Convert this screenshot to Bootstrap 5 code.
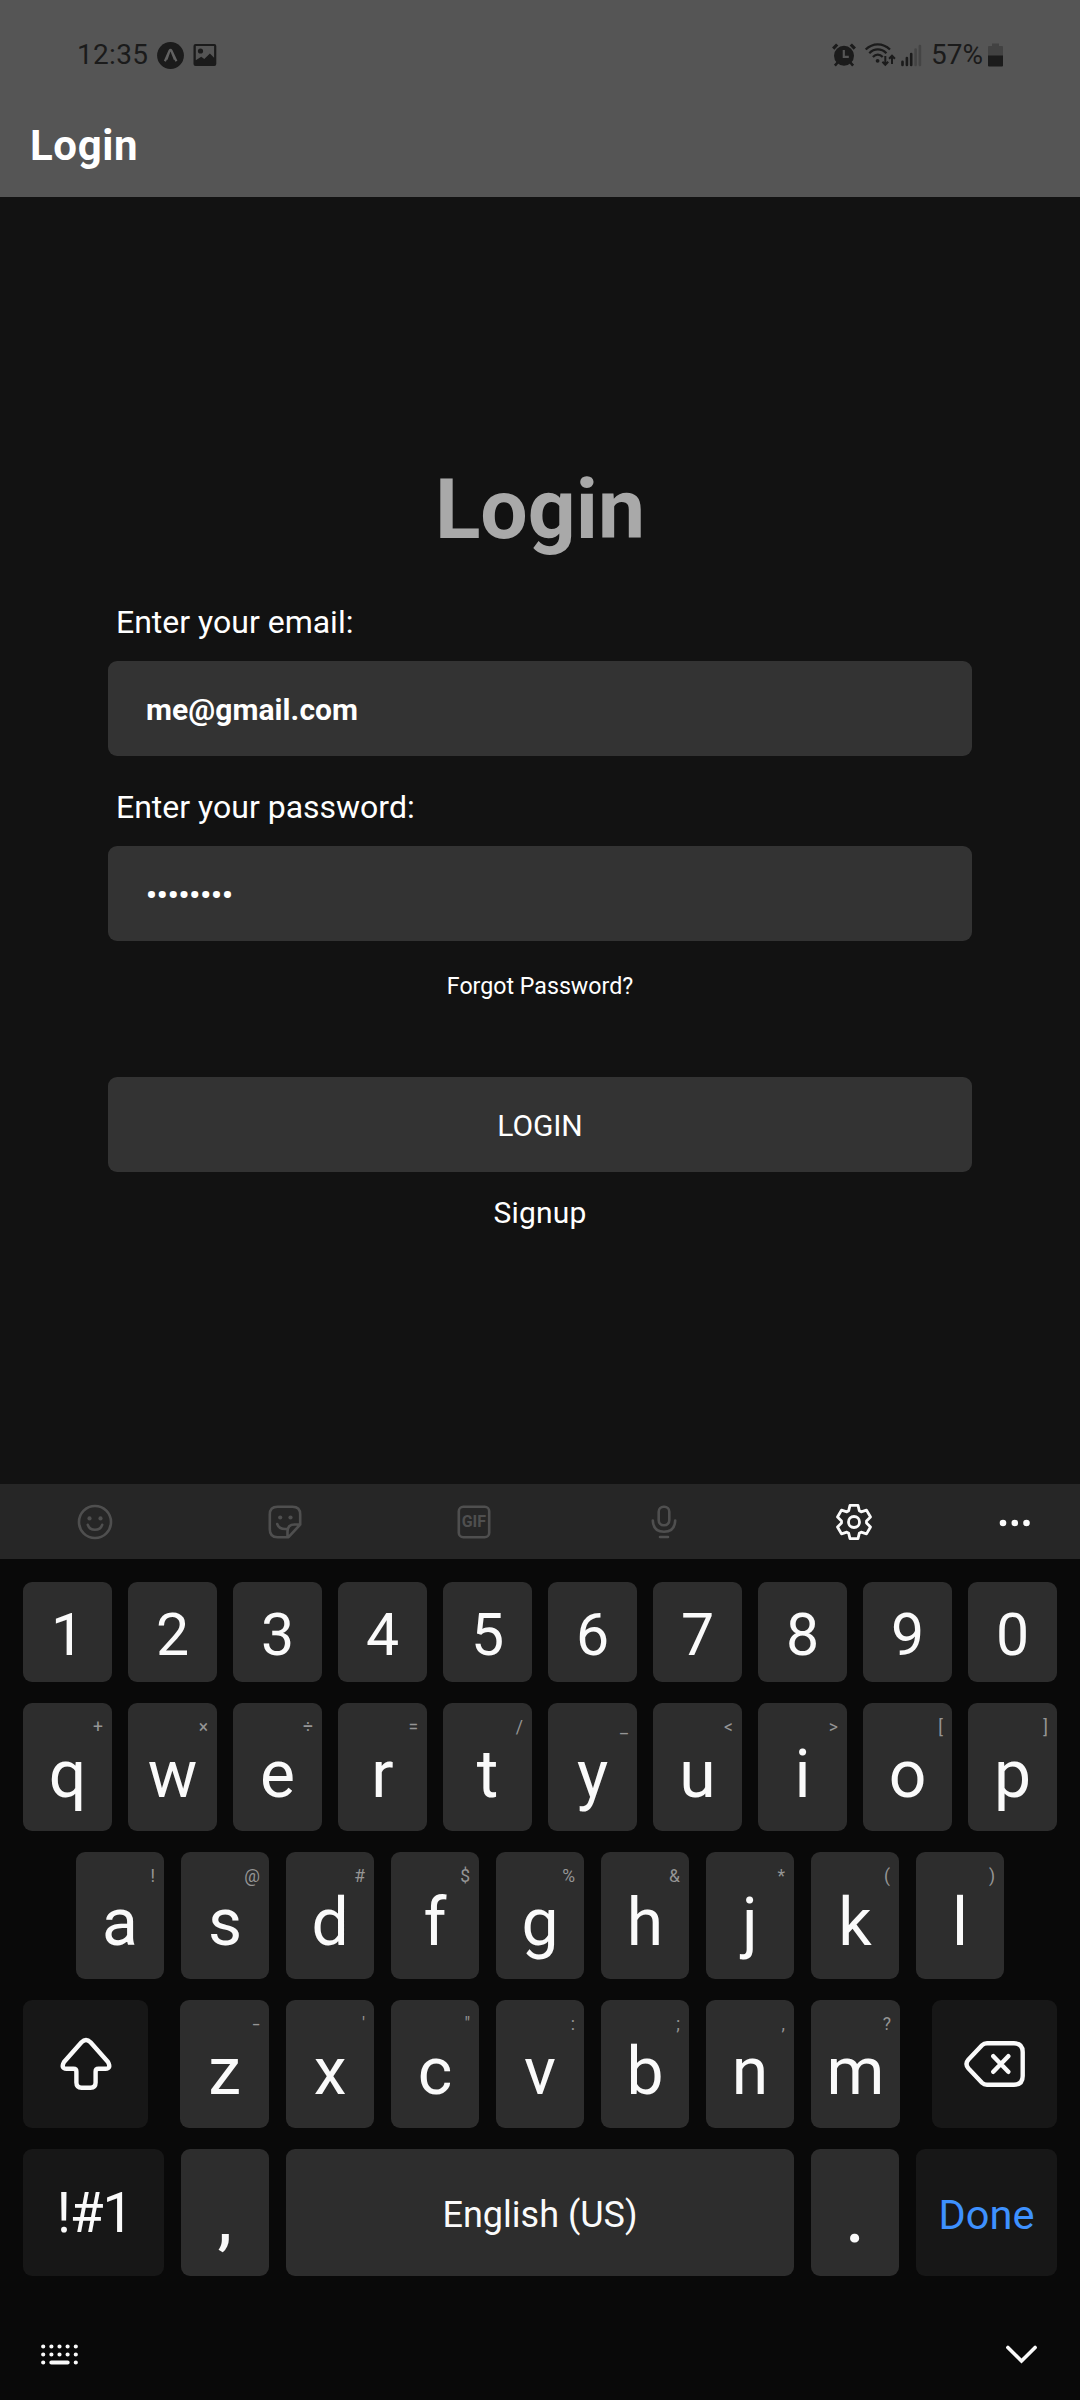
<!DOCTYPE html>
<html lang="en">
<head>
<meta charset="utf-8">
<meta name="viewport" content="width=device-width, initial-scale=1">
<title>Login</title>
<link rel="stylesheet" href="https://cdn.jsdelivr.net/npm/bootstrap@5.3.0/dist/css/bootstrap.min.css">
<style>
  body { font-family: Roboto, "Liberation Sans", sans-serif; background: #121212; color: #fff; width: 1080px; height: 2400px; overflow: hidden; }
  svg { display: block; flex: none; overflow: visible; }

  /* header */
  .app-header { background: #555; height: 197px; }
  .status-bar { height: 110px; padding: 0 77px 0 77px; font-size: 28px; line-height: 36px; color: #1b1b1b; }
  .clock { letter-spacing: .3px; }
  .screen-title { font-size: 42px; line-height: 72px; font-weight: 700; letter-spacing: .6px; padding-left: 30px; margin: 0; }

  /* form */
  .login-form { height: 1287px; padding: 263px 108px 0; }
  .form-heading { font-size: 84px; line-height: 100px; font-weight: 700; color: #a9a9a9; margin: 0 0 44px; }
  .field-label { font-size: 32px; line-height: 36px; margin: 0 0 21px; padding-left: 8px; }
  .second-label { margin-top: 33px; }
  .field-box, .field-box:focus { height: 95px; background: #333; color: #fff; border: 0; border-radius: 9px; padding: 2px 38px 0; font-size: 30px; font-weight: 700; letter-spacing: .06px; box-shadow: none; }
  .forgot-link { font-size: 23.2px; line-height: 30px; margin-top: 30px; }
  .login-btn, .login-btn:hover { height: 95px; margin-top: 76px; background: #333; color: #fff; border: 0; border-radius: 9px; padding: 2px 0 0; font-size: 30px; line-height: 36px; letter-spacing: -.1px; }
  .signup-link { font-size: 30px; line-height: 36px; margin-top: 23px; letter-spacing: .2px; }

  /* keyboard */
  .kb-panel { background: #090909; height: 916px; }
  .kb-tools { background: #262626; height: 75px; color: #4f4f4f; }
  .kb-slot { width: 189.8px; }
  .kb-more { width: 131px; }
  .kb-rows { padding: 23px 23px 0; }
  .kb-row { gap: 17px; }
  .kb-row.wide { gap: 16px; }
  .key, .key:hover { position: relative; flex: none; width: 88px; height: 127px; background: #2d2d2d; color: #fafafa; border: 0; border-radius: 9px; padding: 15px 0 0; font-size: 66px; line-height: 1; display: flex; align-items: center; justify-content: center; }
  .wide .key, .key.w89 { width: 89px; }
  .h128 .key { height: 128px; }
  .digits .key { height: 100px; font-size: 59px; padding-top: 5px; }
  .key.fn { background: #171717; padding-top: 0; }
  .key.shiftable { width: 125px; }
  .key.corner { width: 141px; }
  .key.sym { font-size: 55px; letter-spacing: -1.2px; padding: 2px 0 0 2px; }
  .key.space { width: 508px; font-size: 36px; padding-top: 5px; }
  .key.done { font-size: 41.5px; color: #3e91ff; padding-top: 5px; }
  .key.punct { font-weight: 500; }
  .hint { position: absolute; top: 14px; right: 9px; font-size: 17.5px; line-height: 20px; color: #959595; }
  .hint-dash { transform: scaleX(1.5); transform-origin: right; }
  .kb-nav { padding: 0 43px 0 41px; margin-top: 68px; }
</style>
</head>
<body>
<header class="app-header">
  <div class="status-bar d-flex align-items-center">
    <span class="clock">12:35</span>
    <svg style="margin-left:9px" width="27" height="27" viewBox="0 0 27 27"><circle cx="13.5" cy="13.5" r="13.4" fill="#1b1b1b"/><path d="M7.900 19.200 12.600 8.600q.9-1.600 1.800 0l5 10.600M12.500 9l-3 8.500M14.500 9l3.400 8.500" fill="none" stroke="#626262" stroke-width="2.200"/></svg>
    <svg style="margin-left:9px" width="24" height="24" viewBox="0 0 24 24"><path fill="#1b1b1b" fill-rule="evenodd" d="M2.500 1h18.800a2 2 0 0 1 2 2v18a2 2 0 0 1-2 2H2.500a2 2 0 0 1-2-2V3a2 2 0 0 1 2-2Zm.3 1.900v14.400l5.400-3.500 3.100 2.300 5.600-5.600 4.200 4.300V2.900Z"/><circle cx="7.500" cy="8" r="2.600" fill="#1b1b1b"/></svg>
    <svg class="ms-auto" width="24" height="24" viewBox="0 0 24 24"><g fill="none" stroke="#1b1b1b" stroke-linecap="butt"><path stroke-width="3.200" d="M1.200 5.600 5.200 1.500M22.800 5.600 18.800 1.500"/><path stroke-width="2.600" d="M6.500 18.500 2.900 22.700M17.500 18.500 21.100 22.700"/></g><circle cx="12" cy="12.700" r="10" fill="#1b1b1b"/><path d="M11.800 7v6.800h5" fill="none" stroke="#555" stroke-width="2.200"/></svg>
    <svg style="margin-left:9px" width="31" height="24" viewBox="0 0 31 24"><g fill="none" stroke="#1b1b1b" stroke-width="2.300"><path d="M.7 6.500Q6 1.300 12.800 1.300T25 6.500M4.300 10.200Q8 6.400 12.800 6.400t8.600 3.800M7.900 14q2.200-2.300 4.900-2.300T17.700 14"/><path stroke-width="2" d="M20.300 13v8.500M17.400 18.800l2.900 3 2.900-3M27 21V13M24.100 15.800l2.900-3 2.900 3"/></g><circle cx="12.600" cy="17.800" r="1.900" fill="#1b1b1b"/></svg>
    <svg style="margin-left:5px" width="21" height="24" viewBox="0 0 21 24"><g fill="none" stroke-width="2.600" stroke-linecap="round"><path stroke="#1b1b1b" d="M1.500 22v-3.200M5.900 22v-7M10.200 22V11"/><path stroke="#444" d="M14.600 22V6.500M18.900 22V3"/></g></svg>
    <span style="margin-left:9px">57%</span>
    <svg style="margin-left:5px" width="15" height="24" viewBox="0 0 15 24"><path fill="#424242" d="M4 .5h7V3h3q1 0 1 1v9H0V4q0-1 1-1h3Z"/><path fill="#1b1b1b" d="M0 12.500h15V22.500q0 1-1 1H1q-1 0-1-1Z"/></svg>
  </div>
  <h1 class="screen-title">Login</h1>
</header>

<form class="login-form d-flex flex-column">
  <h2 class="form-heading text-center">Login</h2>
  <label class="field-label" for="email">Enter your email:</label>
  <input class="form-control field-box" id="email" type="text" value="me@gmail.com">
  <label class="field-label second-label" for="pw">Enter your password:</label>
  <input class="form-control field-box" id="pw" type="password" value="password">
  <a class="forgot-link text-center text-white text-decoration-none">Forgot Password?</a>
  <button class="btn login-btn w-100" type="button">LOGIN</button>
  <a class="signup-link text-center text-white text-decoration-none">Signup</a>
</form>

<section class="kb-panel">
  <div class="kb-tools d-flex align-items-center">
    <div class="kb-slot d-flex justify-content-center">
      <svg width="36" height="36" viewBox="-18 -18 36 36" fill="none" stroke="currentColor" stroke-width="2.600" stroke-linecap="round"><circle r="16"/><path d="M-7.200 2.800q1.700 5 7.200 5t7.200-5"/><g fill="currentColor" stroke="none"><circle cx="-5.500" cy="-3.600" r="2.100"/><circle cx="5.500" cy="-3.600" r="2.100"/></g></svg>
    </div>
    <div class="kb-slot d-flex justify-content-center">
      <svg width="36" height="36" viewBox="-18 -18 36 36" fill="none" stroke="currentColor" stroke-width="2.600" stroke-linecap="round" stroke-linejoin="round"><path d="M15.200 2.500V-7.500q0-7.700-7.700-7.700h-15q-7.700 0-7.700 7.700v15q0 7.700 7.700 7.700H3.500L15.200 2.500H9.500q-7 0-7 7v5.500M-7.800 2q2 5.500 9 5"/><g fill="currentColor" stroke="none"><circle cx="-4.800" cy="-4.500" r="2.100"/><circle cx="5.500" cy="-4.500" r="2.100"/></g></svg>
    </div>
    <div class="kb-slot d-flex justify-content-center">
      <svg width="36" height="36" viewBox="-18 -18 36 36"><rect x="-15.200" y="-15.200" width="30.400" height="30.400" rx="4.500" fill="none" stroke="currentColor" stroke-width="2.600"/><text x="-.2" y="5" text-anchor="middle" font-size="16" font-weight="700" fill="currentColor">GIF</text></svg>
    </div>
    <div class="kb-slot d-flex justify-content-center">
      <svg width="36" height="36" viewBox="-18 -18 36 36" fill="none" stroke="currentColor" stroke-width="2.600" stroke-linecap="round"><rect x="-5.300" y="-15.200" width="10.600" height="18.500" rx="5"/><path d="M-11.200-1.500q.5 11.300 11.200 11.300T11.200-1.500M-4 15H4"/></svg>
    </div>
    <div class="kb-slot d-flex justify-content-center">
      <svg width="36" height="36" viewBox="-18 -18 36 36" fill="none" stroke="#fafafa" stroke-width="2.800" stroke-linejoin="round"><circle r="5.500"/><path d="M-4-16.700H4L5.300-11.300 7.200-10.200 12.500-11.900 16.500-5 12.500-1.100V1.100L16.500 5 12.500 11.900 7.200 10.200 5.300 11.300 4 16.700H-4L-5.300 11.300-7.200 10.200-12.500 11.900-16.500 5-12.500 1.100V-1.100L-16.500-5-12.500-11.900-7.200-10.200-5.300-11.300Z"/></svg>
    </div>
    <div class="kb-more d-flex justify-content-center">
      <svg width="32" height="8" viewBox="-16 -5 32 8" fill="#fafafa"><circle cx="-11" r="3.300"/><circle cx=".8" r="3.300"/><circle cx="12.500" r="3.300"/></svg>
    </div>
  </div>

  <div class="kb-rows">
    <div class="kb-row wide digits d-flex" style="margin-bottom:21px">
      <button class="btn key">1</button><button class="btn key">2</button><button class="btn key">3</button><button class="btn key">4</button><button class="btn key">5</button><button class="btn key">6</button><button class="btn key">7</button><button class="btn key">8</button><button class="btn key">9</button><button class="btn key">0</button>
    </div>
    <div class="kb-row wide h128 d-flex" style="margin-bottom:21px">
      <button class="btn key">q<span class="hint">+</span></button><button class="btn key">w<span class="hint">×</span></button><button class="btn key">e<span class="hint">÷</span></button><button class="btn key">r<span class="hint">=</span></button><button class="btn key">t<span class="hint">/</span></button><button class="btn key">y<span class="hint">_</span></button><button class="btn key">u<span class="hint">&lt;</span></button><button class="btn key">i<span class="hint">&gt;</span></button><button class="btn key">o<span class="hint">[</span></button><button class="btn key">p<span class="hint">]</span></button>
    </div>
    <div class="kb-row d-flex justify-content-center" style="margin-bottom:21px">
      <button class="btn key">a<span class="hint">!</span></button><button class="btn key">s<span class="hint">@</span></button><button class="btn key">d<span class="hint">#</span></button><button class="btn key">f<span class="hint">$</span></button><button class="btn key">g<span class="hint">%</span></button><button class="btn key">h<span class="hint">&amp;</span></button><button class="btn key">j<span class="hint">*</span></button><button class="btn key">k<span class="hint">(</span></button><button class="btn key">l<span class="hint">)</span></button>
    </div>
    <div class="h128 d-flex justify-content-between" style="margin-bottom:21px">
      <button class="btn key fn shiftable" aria-label="Shift">
        <svg width="54" height="54" viewBox="-27 -27 54 54" fill="none" stroke="#fafafa" stroke-width="4.400" stroke-linejoin="round"><path d="M-4.500-21.700Q0-26.300 4.500-21.700L22-2Q25.500 4.700 19.500 4.700H12.500Q9.600 4.700 9.600 7.500V18.500Q9.600 23.700 4.500 23.700H-4.500Q-9.600 23.700-9.600 18.500V7.500Q-9.600 4.700-12.500 4.700H-19.500Q-25.500 4.700-22-2Z"/></svg>
      </button>
      <div class="kb-row d-flex">
        <button class="btn key w89">z<span class="hint hint-dash">-</span></button><button class="btn key">x<span class="hint">'</span></button><button class="btn key">c<span class="hint">"</span></button><button class="btn key">v<span class="hint">:</span></button><button class="btn key">b<span class="hint">;</span></button><button class="btn key">n<span class="hint">,</span></button><button class="btn key w89">m<span class="hint">?</span></button>
      </div>
      <button class="btn key fn shiftable" aria-label="Backspace">
        <svg width="62" height="48" viewBox="-31 -24 62 48" fill="none" stroke="#fafafa" stroke-width="4.400" stroke-linejoin="round" stroke-linecap="round"><path d="M-8-20.700H19Q27.700-20.700 27.700-12V12Q27.700 20.700 19 20.700H-8Q-11 20.700-13 18.700L-26.500 4.500Q-30.500 0-26.500-4.500L-13-18.700Q-11-20.700-8-20.700ZM-1.700-7.800 13.300 7.800M13.300-7.800-1.700 7.800"/></svg>
      </button>
    </div>
    <div class="kb-row d-flex">
      <button class="btn key fn corner sym">!#1</button><button class="btn key punct">,</button><button class="btn key space">English (US)</button><button class="btn key punct">.</button><button class="btn key fn corner done">Done</button>
    </div>
  </div>

  <div class="kb-nav d-flex justify-content-between align-items-center">
    <svg width="37" height="22" viewBox="0 0 37 22" fill="none" stroke="#fafafa" stroke-width="4.200" stroke-linecap="round"><path d="M2.200 2.500h0M10.400 2.500h0M18.500 2.500h0M26.600 2.500h0M34.800 2.500h0M2.200 10.500h0M10.400 10.500h0M18.500 10.500h0M26.600 10.500h0M34.800 10.500h0M2.200 18.500h0M10.400 18.500H26.600M34.800 18.500h0"/></svg>
    <svg width="31" height="20" viewBox="0 0 31 20" fill="none" stroke="#fafafa" stroke-width="3.600" stroke-linecap="round"><path d="M1.900 2.500 15.500 16 29.100 2.500"/></svg>
  </div>
</section>
<script src="https://cdn.jsdelivr.net/npm/bootstrap@5.3.0/dist/js/bootstrap.bundle.min.js"></script>
</body>
</html>
